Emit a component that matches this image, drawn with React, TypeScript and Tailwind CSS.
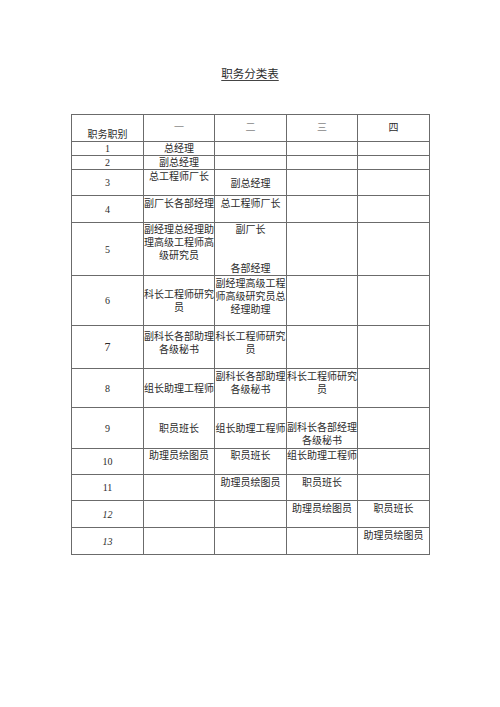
import React from 'react';

type Cell = {
  lines?: string[];
  v?: 'top' | 'middle' | 'bottom';
  pt?: string;
  split?: [string, string];
};

type Row = {
  h: string;
  num: string;
  numClass?: string;
  cells: Cell[];
};

const rows: Row[] = [
  { h: 'h-[14px]', num: '1', cells: [{ lines: ['总经理'], v: 'middle' }, {}, {}, {}] },
  { h: 'h-[13px]', num: '2', cells: [{ lines: ['副总经理'], v: 'middle' }, {}, {}, {}] },
  {
    h: 'h-[26px]',
    num: '3',
    cells: [{ lines: ['总工程师厂长'], v: 'top', pt: 'pt-0' }, { lines: ['副总经理'], v: 'top', pt: 'pt-[7px]' }, {}, {}],
  },
  {
    h: 'h-[27px]',
    num: '4',
    cells: [
      { lines: ['副厂长各部经理'], v: 'top', pt: 'pt-[1px]' },
      { lines: ['总工程师厂长'], v: 'top', pt: 'pt-[1px]' },
      {},
      {},
    ],
  },
  {
    h: 'h-[53px]',
    num: '5',
    cells: [
      { lines: ['副经理总经理助', '理高级工程师高', '级研究员'], v: 'top', pt: 'pt-0' },
      { split: ['副厂长', '各部经理'] },
      {},
      {},
    ],
  },
  {
    h: 'h-[50px]',
    num: '6',
    cells: [
      { lines: ['科长工程师研究', '员'], v: 'middle' },
      { lines: ['副经理高级工程', '师高级研究员总', '经理助理'], v: 'top', pt: 'pt-[1px]' },
      {},
      {},
    ],
  },
  {
    h: 'h-[43px]',
    num: '7',
    numClass: 'text-[12px]',
    cells: [
      { lines: ['副科长各部助理', '各级秘书'], v: 'top', pt: 'pt-[4px]' },
      { lines: ['科长工程师研究', '员'], v: 'top', pt: 'pt-[4px]' },
      {},
      {},
    ],
  },
  {
    h: 'h-[39px]',
    num: '8',
    cells: [
      { lines: ['组长助理工程师'], v: 'middle' },
      { lines: ['副科长各部助理', '各级秘书'], v: 'top', pt: 'pt-[1px]' },
      { lines: ['科长工程师研究', '员'], v: 'top', pt: 'pt-[1px]' },
      {},
    ],
  },
  {
    h: 'h-[41px]',
    num: '9',
    cells: [
      { lines: ['职员班长'], v: 'middle' },
      { lines: ['组长助理工程师'], v: 'middle' },
      { lines: ['副科长各部经理', '各级秘书'], v: 'top', pt: 'pt-[13px]' },
      {},
    ],
  },
  {
    h: 'h-[26px]',
    num: '10',
    cells: [
      { lines: ['助理员绘图员'], v: 'top', pt: 'pt-0' },
      { lines: ['职员班长'], v: 'top', pt: 'pt-0' },
      { lines: ['组长助理工程师'], v: 'top', pt: 'pt-0' },
      {},
    ],
  },
  {
    h: 'h-[26px]',
    num: '11',
    cells: [
      {},
      { lines: ['助理员绘图员'], v: 'top', pt: 'pt-[1px]' },
      { lines: ['职员班长'], v: 'top', pt: 'pt-[1px]' },
      {},
    ],
  },
  {
    h: 'h-[27px]',
    num: '12',
    numClass: 'italic',
    cells: [
      {},
      {},
      { lines: ['助理员绘图员'], v: 'top', pt: 'pt-[1px]' },
      { lines: ['职员班长'], v: 'top', pt: 'pt-[1px]' },
    ],
  },
  {
    h: 'h-[27px]',
    num: '13',
    numClass: 'italic',
    cells: [{}, {}, {}, { lines: ['助理员绘图员'], v: 'top', pt: 'pt-[1px]' }],
  },
];

const td = 'border border-[#6b6b6b] p-0 text-center';

function BodyCell({ cell }: { cell: Cell }) {
  if (cell.split) {
    return (
      <td className={`${td} align-top`}>
        <div className="flex h-[52px] flex-col justify-between">
          <div className="whitespace-nowrap">{cell.split[0]}</div>
          <div className="whitespace-nowrap">{cell.split[1]}</div>
        </div>
      </td>
    );
  }
  if (!cell.lines) return <td className={td}></td>;
  const valign = cell.v === 'top' ? 'align-top' : cell.v === 'bottom' ? 'align-bottom' : 'align-middle';
  return (
    <td className={`${td} ${valign} ${cell.pt ?? ''}`}>
      {cell.lines.map((l, i) => (
        <div key={i} className="whitespace-nowrap">
          {l}
        </div>
      ))}
    </td>
  );
}

export default function App() {
  return (
    <div className="h-[707px] w-[500px] bg-white font-['Liberation_Serif','Noto_Sans_CJK_SC',serif] text-[#2b2b2b]">
      <div className="pt-[67px] text-center text-[11.5px] leading-[14px]">
        <span className="underline underline-offset-2 decoration-[#444]">职务分类表</span>
      </div>

      <table className="mt-[33px] ml-[71px] w-[358px] table-fixed border-collapse text-[10px] leading-[13px]">
        <colgroup>
          <col className="w-[72px]" />
          <col className="w-[71px]" />
          <col className="w-[72px]" />
          <col className="w-[71px]" />
          <col className="w-[72px]" />
        </colgroup>
        <tbody>
          <tr className="h-[27px]">
            <td className={`${td} align-bottom`}>职务职别</td>
            <td className={`${td} align-top pt-[6px] text-[#888]`}>一</td>
            <td className={`${td} align-top pt-[6px] text-[#888]`}>二</td>
            <td className={`${td} align-top pt-[6px] text-[#888]`}>三</td>
            <td className={`${td} align-top pt-[6px]`}>四</td>
          </tr>
          {rows.map((r) => (
            <tr key={r.num} className={r.h}>
              <td className={`${td} align-middle font-['Liberation_Serif',serif] ${r.numClass ?? ''}`}>{r.num}</td>
              {r.cells.map((c, i) => (
                <BodyCell key={i} cell={c} />
              ))}
            </tr>
          ))}
        </tbody>
      </table>
    </div>
  );
}
